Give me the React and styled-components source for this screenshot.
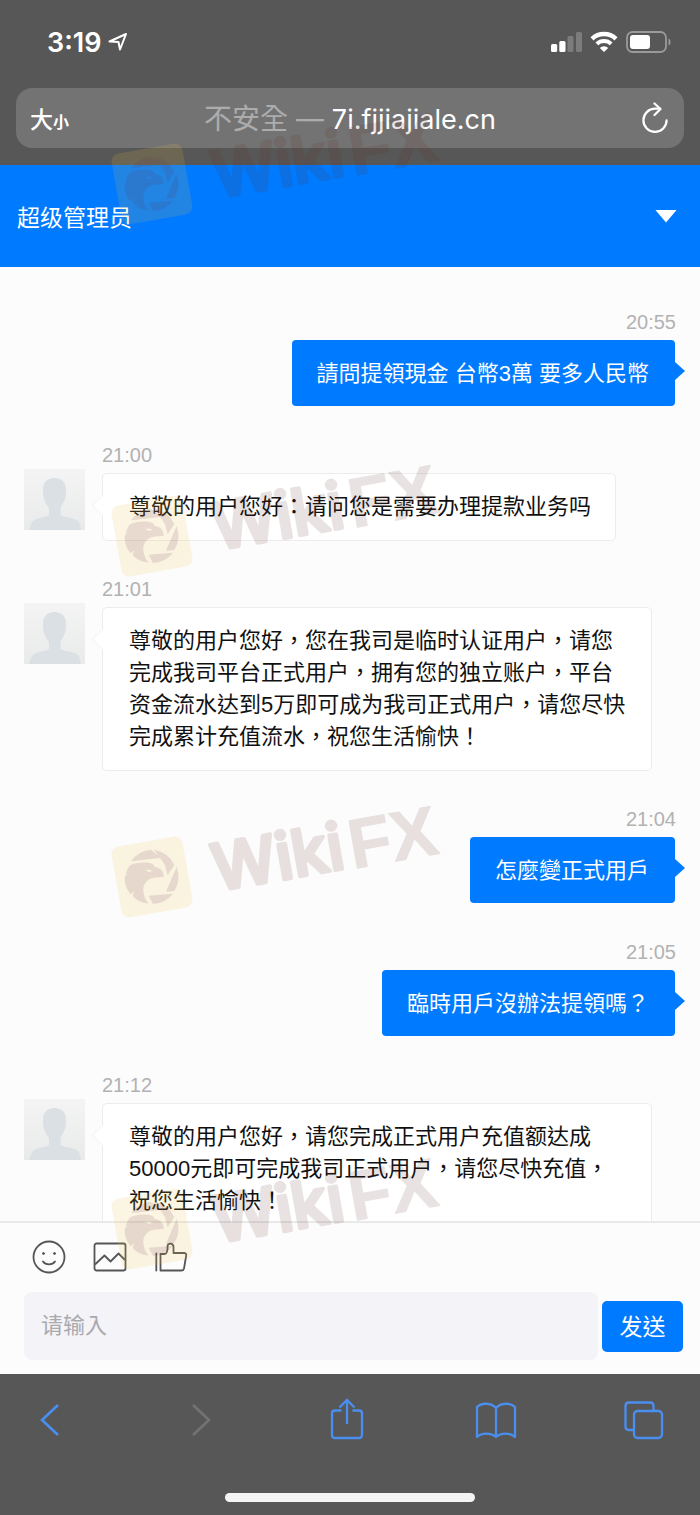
import React from 'react'
// --- Styles ---
import styled, { createGlobalStyle, css } from 'styled-components'

const latin = `'Liberation Sans', 'Noto Sans CJK TC', sans-serif`
const system = `Inter, 'Noto Sans CJK TC', sans-serif`

// --- Data ---
const messages = [
  { time: '20:55', sent: true, text: '請問提領現金 台幣3萬 要多人民幣' },
  { time: '21:00', text: '尊敬的用户您好：请问您是需要办理提款业务吗' },
  {
    time: '21:01',
    text: '尊敬的用户您好，您在我司是临时认证用户，请您完成我司平台正式用户，拥有您的独立账户，平台资金流水达到5万即可成为我司正式用户，请您尽快完成累计充值流水，祝您生活愉快！',
  },
  { time: '21:04', sent: true, text: '怎麼變正式用戶' },
  { time: '21:05', sent: true, text: '臨時用戶沒辦法提領嗎？' },
  {
    time: '21:12',
    text: '尊敬的用户您好，请您完成正式用户充值额达成50000元即可完成我司正式用户，请您尽快充值，祝您生活愉快！',
  },
]

// heights of the repeated watermark tiles, top to bottom
const tiles = [352, 341, 352, 352]

// --- Icons ---
const LocationIcon = () => (
  <svg width="20" height="20" viewBox="0 0 20 20" fill="none" stroke="#fff" strokeWidth="2" strokeLinejoin="round">
    <path d="M1.500 9.500 18 2 12 17.500 10.500 10Z" />
  </svg>
)

const SignalIcon = () => (
  <svg width="31" height="22" viewBox="0 0 31 22" fill="#fff">
    <rect x="0" y="13" width="6.200" height="8" rx="1.500" />
    <rect x="8.300" y="10" width="6.200" height="11" rx="1.500" />
    <rect x="16.500" y="5" width="6" height="16" rx="1.500" fill="#7c7c7c" />
    <rect x="25" y="1" width="6" height="20" rx="1.500" fill="#7c7c7c" />
  </svg>
)

const WifiIcon = () => (
  <svg width="28" height="22" viewBox="0 0 28 22" fill="none" stroke="#fff">
    <path d="M2 7.800A17.500 17.500 0 0 1 26 7.800" strokeWidth="4.400" />
    <path d="M6.800 12.900A10.500 10.500 0 0 1 21.200 12.900" strokeWidth="4" />
    <path d="M14 21 9.800 17A6 6 0 0 1 18.200 17Z" fill="#fff" stroke="none" />
  </svg>
)

const BatteryIcon = () => (
  <svg width="46" height="22" viewBox="0 0 46 22">
    <rect x="1" y="1" width="39" height="20" rx="5.500" fill="none" stroke="#9a9a9a" strokeWidth="1.800" />
    <rect x="4" y="4" width="20" height="14" rx="3" fill="#fff" />
    <path d="M42.500 7.500C45.300 8.500 45.300 13.500 42.500 14.500Z" fill="#9a9a9a" />
  </svg>
)

const ReloadIcon = () => (
  <svg width="28" height="32" viewBox="0 0 28 32" fill="none" stroke="#fff" strokeWidth="2.200" strokeLinecap="round" strokeLinejoin="round">
    <path d="M18 6.700H13A11.600 11.600 0 1 0 24.600 18.300" />
    <path d="M12.500 1.500 18.500 7 12.500 13" />
  </svg>
)

const SmileIcon = () => (
  <svg width="34" height="34" viewBox="0 0 34 34" fill="none" stroke="#555" strokeWidth="1.800" strokeLinecap="round">
    <circle cx="17" cy="17" r="15.500" />
    <path d="M11 21.500C13.500 25.200 20.500 25.200 23 21.500" />
    <circle cx="11.500" cy="13.500" r="1" fill="#555" strokeWidth="1" />
    <circle cx="22.500" cy="13.500" r="1" fill="#555" strokeWidth="1" />
  </svg>
)

const PictureIcon = () => (
  <svg width="34" height="34" viewBox="0 0 34 34" fill="none" stroke="#555" strokeWidth="1.800" strokeLinejoin="round">
    <rect x="1.500" y="3.500" width="31" height="27" rx="2" />
    <path d="M2 24.500 11.500 15.500 17.500 21.500 25.500 13.500 32 20" />
  </svg>
)

const ThumbIcon = () => (
  <svg width="34" height="34" viewBox="0 0 34 34" fill="none" stroke="#555" strokeWidth="1.800" strokeLinecap="round" strokeLinejoin="round">
    <path d="M2.300 13.500V30.500" />
    <path d="M6.500 30.500V14H11C14 13 13.500 9.500 13.500 6.500C13.500 2.500 19.500 2.500 19.500 7V13H30Q32.500 13 32.200 15.500L30 28.500Q29.500 30.500 27.500 30.500Z" />
  </svg>
)

const BackIcon = () => (
  <svg width="44" height="44" viewBox="0 0 44 44" fill="none" stroke="currentColor" strokeWidth="2.600">
    <path d="M30 7 14 22 30 37" />
  </svg>
)

const ForwardIcon = () => (
  <svg width="44" height="44" viewBox="0 0 44 44" fill="none" stroke="currentColor" strokeWidth="2.600">
    <path d="M16 7 32 22 16 37" />
  </svg>
)

const ShareIcon = () => (
  <svg width="44" height="44" viewBox="0 0 44 44" fill="none" stroke="currentColor" strokeWidth="2.300">
    <path d="M16.500 12.500H10Q7 12.500 7 15.500V37Q7 40 10 40H34Q37 40 37 37V15.500Q37 12.500 34 12.500H27.500" />
    <path d="M22 26V2M14.500 9.500 22 2 29.500 9.500" />
  </svg>
)

const BookIcon = () => (
  <svg width="44" height="44" viewBox="0 0 44 44" fill="none" stroke="currentColor" strokeWidth="2.300" strokeLinejoin="round">
    <path d="M22 10C17 4.500 7.500 4.500 3 9V39C7.500 34.500 17 34.500 22 39C27 34.500 36.500 34.500 41 39V9C36.500 4.500 27 4.500 22 10V38" />
  </svg>
)

const TabsIcon = () => (
  <svg width="44" height="44" viewBox="0 0 44 44" fill="none" stroke="currentColor" strokeWidth="2.300">
    <rect x="12" y="13" width="28" height="27" rx="3.500" />
    <path d="M12 32H7Q3.500 32 3.500 28.500V8Q3.500 4.500 7 4.500H28Q31.500 4.500 31.500 8V13" />
  </svg>
)

const AvatarPicture = () => (
  <svg width="61" height="61" viewBox="0 0 61 61" role="img" aria-label="客服">
    <defs>
      <linearGradient id="avatarBg" x1="0" y1="0" x2="0" y2="1">
        <stop offset="0" stopColor="#f4f4f4" />
        <stop offset="1" stopColor="#e9eaea" />
      </linearGradient>
    </defs>
    <rect width="61" height="61" fill="url(#avatarBg)" />
    <path
      fill="#dae0e3"
      d="M30.500 9C38 9 42.500 14 42 22C42 26 41.500 30 40 32C38.500 36 37 37 36.500 39V46C40 49 51 48 55 53L57 61H5L8 53C12 48 21 49 25 46V39C24 37 22 36 21 32C19.500 30 19 26 19 22C18.500 14 23 9 30.500 9Z"
    />
  </svg>
)

const WatermarkPicture = () => (
  <svg width="360" height="180" viewBox="0 0 360 180">
    <g opacity="0.14">
      <rect x="-36" y="-36" width="72" height="72" rx="8" fill="#efc041" transform="translate(62 134) rotate(-10)" />
    </g>
    <g opacity="0.13" fill="#602a26" transform="translate(62 134)">
      <g transform="scale(0.333) translate(-187 -262)" fill="#6a2b52">
        <path d="M124 215A82 82 0 0 1 183 180L217 204Z" />
        <path d="M194 180A82 82 0 0 1 254 226L234 257L226 226Z" />
        <path d="M261 232A82 82 0 0 1 254 304L229 306Z" />
        <path d="M250 312A82 82 0 0 1 190 343L177 318Z" />
        <path
          fillRule="evenodd"
          d="M119 228C138 219 168 215 189 223L196 232C214 235 224 247 222 263C214 261 208 264 201 263C179 265 163 277 161 296C160 315 167 330 177 342C158 340 140 332 129 319L134 304L124 314C110 300 103 280 106 260L114 250L107 252ZM166 240L177 247L189 243L180 240Z"
        />
      </g>
      <g transform="rotate(-10)" stroke="#602a26" strokeLinejoin="round">
        <text x="61" y="25" fontFamily="Inter" fontSize="64" fontWeight="500" strokeWidth="4">Wiki</text>
        <text x="199" y="27" fontFamily="Liberation Sans" fontSize="70" fontWeight="700" strokeWidth="1">FX</text>
      </g>
    </g>
  </svg>
)

// --- Message Component ---
const Message = ({ time, text, sent }) => (
  <StyledMessage $sent={sent}>
    {!sent && (
      <Avatar>
        <AvatarPicture />
      </Avatar>
    )}
    <MessageBody $sent={sent}>
      <Time>{time}</Time>
      <Bubble $sent={sent}>{text}</Bubble>
    </MessageBody>
  </StyledMessage>
)

// --- App ---
const App = () => {
  return (
    <>
      <GlobalStyle />
      <Screen>
        <BrowserTop>
          <StatusBar>
            <Clock>
              3:19 <LocationIcon />
            </Clock>
            <StatusIcons>
              <SignalIcon />
              <WifiIcon />
              <BatteryIcon />
            </StatusIcons>
          </StatusBar>
          <AddressBar>
            <TextSize type="button">
              大<small>小</small>
            </TextSize>
            <Address type="button">
              <span>不安全 — </span>7i.fjjiajiale.cn
            </Address>
            <Reload type="button" aria-label="重新載入">
              <ReloadIcon />
            </Reload>
          </AddressBar>
        </BrowserTop>

        <ChatHeader>
          <h1>超级管理员</h1>
          <Collapse type="button" aria-label="收起" />
        </ChatHeader>

        <MessageList>
          {messages.map((message) => (
            <Message key={message.time} {...message} />
          ))}
        </MessageList>

        <Composer>
          <Tools>
            <button type="button" aria-label="表情"><SmileIcon /></button>
            <button type="button" aria-label="图片"><PictureIcon /></button>
            <button type="button" aria-label="点赞"><ThumbIcon /></button>
          </Tools>
          <InputRow>
            <TextBox type="text" placeholder="请输入" aria-label="请输入" />
            <Send type="button">发送</Send>
          </InputRow>
        </Composer>

        <BrowserBottom>
          <NavButtons>
            <NavButton type="button" aria-label="上一頁"><BackIcon /></NavButton>
            <NavButton type="button" aria-label="下一頁" disabled><ForwardIcon /></NavButton>
            <NavButton type="button" aria-label="分享"><ShareIcon /></NavButton>
            <NavButton type="button" aria-label="書籤"><BookIcon /></NavButton>
            <NavButton type="button" aria-label="分頁"><TabsIcon /></NavButton>
          </NavButtons>
          <HomeIndicator />
        </BrowserBottom>

        <Watermarks aria-hidden="true">
          {tiles.map((height, index) => (
            <Tile key={index} $height={height}>
              <WatermarkPicture />
            </Tile>
          ))}
        </Watermarks>
      </Screen>
    </>
  )
}

export default App

// --- Styles ---
const GlobalStyle = createGlobalStyle`
  * {
    box-sizing: border-box;
  }
  body {
    margin: 0;
    font-family: ${latin};
    background-color: #fcfcfc;
  }
  button, input {
    font: inherit;
    border: 0;
    padding: 0;
    background: none;
  }
  button {
    cursor: pointer;
  }
  svg {
    display: block;
    flex-shrink: 0;
  }
`

const Screen = styled.div`
  position: relative;
  display: flex;
  flex-direction: column;
  height: 100vh;
  overflow: hidden;
`

const BrowserTop = styled.div`
  flex-shrink: 0;
  padding-bottom: 17px;
  background-color: #575757;
  color: #fff;
  font-family: ${system};
`

const StatusBar = styled.div`
  display: flex;
  align-items: center;
  justify-content: space-between;
  height: 88px;
  padding: 0 28px 4px 47px;
`

const Clock = styled.div`
  display: flex;
  align-items: center;
  gap: 7px;
  font-size: 27px;
  font-weight: 600;
`

const StatusIcons = styled.div`
  display: flex;
  align-items: center;
  gap: 8px;
`

const AddressBar = styled.div`
  display: grid;
  grid-template-columns: 60px 1fr 60px;
  align-items: center;
  height: 60px;
  margin: 0 16px;
  padding: 0 14px;
  border-radius: 16px;
  background-color: #737373;
`

const TextSize = styled.button`
  display: flex;
  align-items: baseline;
  color: #fff;
  font-size: 23px;
  font-weight: 500;
  small {
    font-size: 16px;
    font-weight: 700;
  }
`

const Address = styled.button`
  padding-bottom: 3px;
  color: #fff;
  font-size: 27px;
  white-space: nowrap;
  span {
    color: #acacac;
    font-size: 28px;
  }
`

const Reload = styled.button`
  justify-self: end;
`

const ChatHeader = styled.header`
  display: flex;
  align-items: center;
  justify-content: space-between;
  flex-shrink: 0;
  height: 102px;
  padding: 0 23px 0 17px;
  background-color: #007aff;
  h1 {
    margin: 0;
    color: #fff;
    font-size: 23px;
    font-weight: 400;
  }
`

const Collapse = styled.button`
  width: 22px;
  height: 13px;
  background-color: #fff;
  clip-path: polygon(0 0, 100% 0, 50% 100%);
`

const MessageList = styled.main`
  display: flex;
  flex: 1;
  flex-direction: column;
  gap: 34px;
  min-height: 0;
  overflow: hidden;
  padding: 41px 24px 0;
`

const StyledMessage = styled.article`
  display: flex;
  flex-shrink: 0;
  gap: 17px;
  padding-right: 24px;
  ${(p) => p.$sent && css`
    justify-content: flex-end;
    padding-right: 0;
    padding-bottom: 1px;
  `}
`

const Avatar = styled.div`
  padding-top: 28px;
`

const MessageBody = styled.div`
  display: flex;
  flex-direction: column;
  align-items: ${(p) => (p.$sent ? 'flex-end' : 'flex-start')};
  gap: 4px;
`

const Time = styled.time`
  color: #b2b2b2;
  font-size: 20px;
  line-height: 28px;
`

const Bubble = styled.p`
  position: relative;
  margin: 0;
  padding: 17px 24px 17px 26px;
  border: 1px solid #ececec;
  border-radius: 5px;
  background-color: #fff;
  color: #111;
  font-size: 22px;
  line-height: 32px;
  &::before {
    content: '';
    position: absolute;
    top: 24px;
    left: -8px;
    width: 14px;
    height: 14px;
    border: solid #f4f4f4;
    border-width: 0 0 1px 1px;
    background-color: #fff;
    transform: rotate(45deg);
  }
  ${(p) => p.$sent && css`
    margin-right: 1px;
    padding: 18px 26px 16px 25px;
    border: 0;
    border-radius: 4px;
    background-color: #007aff;
    color: #fff;
    &::before {
      top: 22px;
      left: 100%;
      width: 0;
      height: 0;
      border: solid transparent;
      border-width: 9px 0 9px 10px;
      border-left-color: #007aff;
      background: none;
      transform: none;
    }
  `}
`

const Composer = styled.form`
  flex-shrink: 0;
  padding: 17px 17px 14px 24px;
  border-top: 2px solid #e9e9e9;
  background-color: #fcfcfc;
`

const Tools = styled.div`
  display: flex;
  gap: 27px;
  padding: 0 8px 18px;
`

const InputRow = styled.div`
  display: flex;
  align-items: center;
  gap: 4px;
`

const TextBox = styled.input`
  flex: 1;
  min-width: 0;
  height: 68px;
  padding: 0 17px;
  border-radius: 8px;
  background-color: #f3f3f8;
  color: #111;
  font-size: 22px;
  &::placeholder {
    color: #a9a9ae;
  }
`

const Send = styled.button`
  width: 81px;
  height: 51px;
  padding-bottom: 2px;
  border-radius: 5px;
  background-color: #007aff;
  color: #fff;
  font-size: 23px;
`

const BrowserBottom = styled.div`
  display: flex;
  flex-direction: column;
  flex-shrink: 0;
  justify-content: space-between;
  height: 141px;
  padding: 24px 0 13px;
  background-color: #575757;
`

const NavButtons = styled.nav`
  display: flex;
  justify-content: space-between;
  padding: 0 34px 0 28px;
`

const NavButton = styled.button`
  color: #4a8ff0;
  &:disabled {
    color: #737373;
  }
`

const HomeIndicator = styled.div`
  align-self: center;
  width: 250px;
  height: 9px;
  border-radius: 5px;
  background-color: #f4f4f4;
`

const Watermarks = styled.div`
  position: absolute;
  inset: 0;
  overflow: hidden;
  padding: 50px 0 0 90px;
  pointer-events: none;
`

const Tile = styled.div`
  height: ${(p) => p.$height}px;
`
